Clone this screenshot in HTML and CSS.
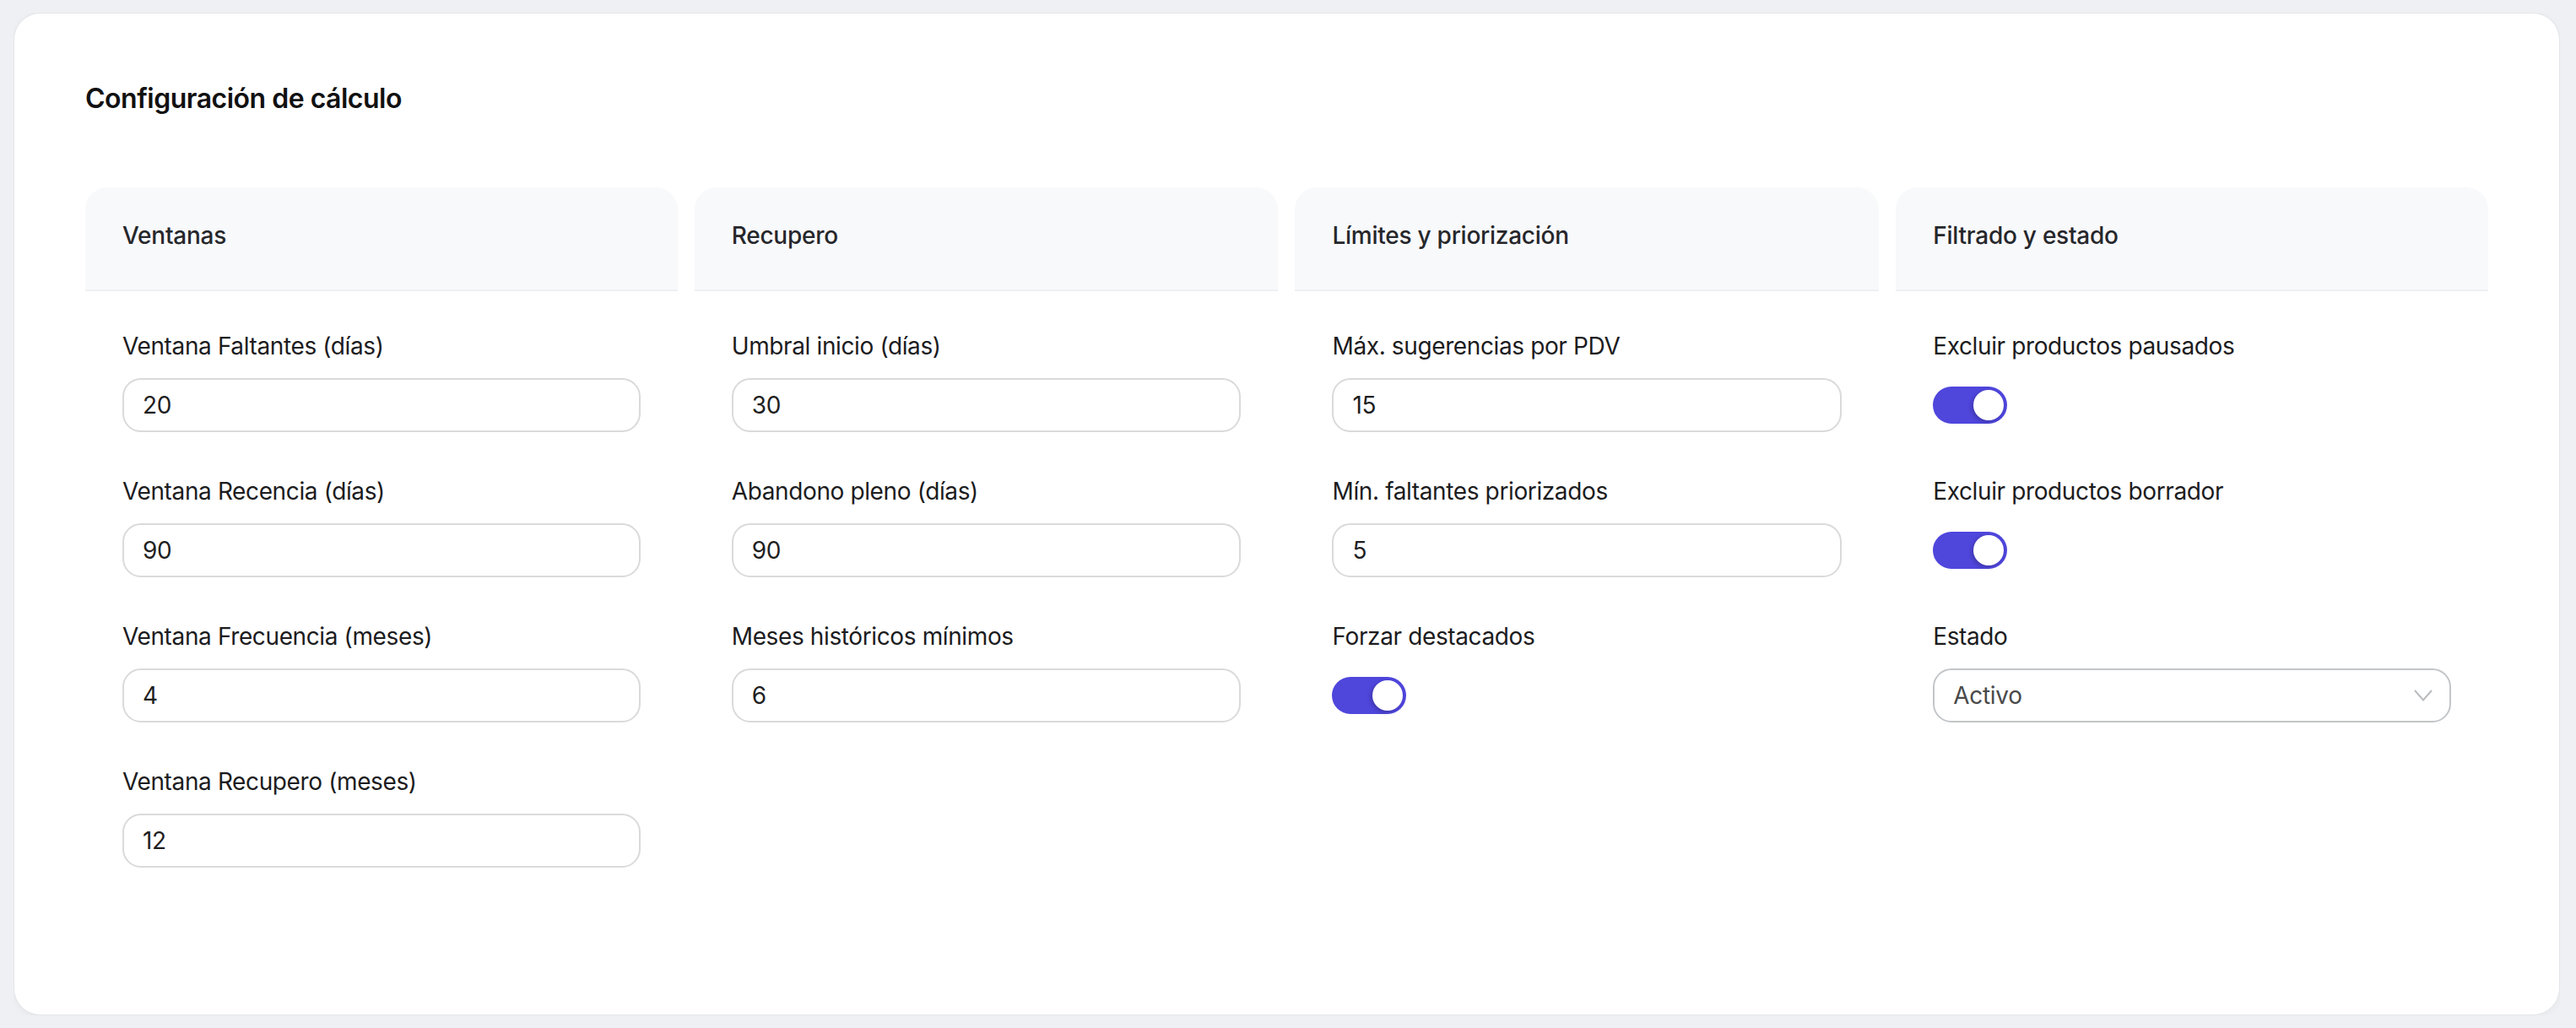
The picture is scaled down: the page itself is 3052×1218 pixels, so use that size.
FILE: index.html
```html
<!DOCTYPE html>
<html lang="es">
<head>
    <meta charset="UTF-8">
    <meta name="viewport" content="width=device-width, initial-scale=1.0">
    <title>Configuración de cálculo</title>
    <link rel="stylesheet" href="styles.css">
</head>
<body>

<div class="card">
    <h2 class="card-title">Configuración de cálculo</h2>

    <div class="sections">
        <section class="section">
            <div class="section-head">Ventanas</div>
            <div class="section-body">
                <div class="field">
                    <label for="winFaltantes">Ventana Faltantes (días)</label>
                    <input class="input" type="text" id="winFaltantes" value="20">
                </div>
                <div class="field">
                    <label for="winRecencia">Ventana Recencia (días)</label>
                    <input class="input" type="text" id="winRecencia" value="90">
                </div>
                <div class="field">
                    <label for="winFrecuencia">Ventana Frecuencia (meses)</label>
                    <input class="input" type="text" id="winFrecuencia" value="4">
                </div>
                <div class="field">
                    <label for="winRecupero">Ventana Recupero (meses)</label>
                    <input class="input" type="text" id="winRecupero" value="12">
                </div>
            </div>
        </section>

        <section class="section">
            <div class="section-head">Recupero</div>
            <div class="section-body">
                <div class="field">
                    <label for="umbralInicio">Umbral inicio (días)</label>
                    <input class="input" type="text" id="umbralInicio" value="30">
                </div>
                <div class="field">
                    <label for="abandonoPleno">Abandono pleno (días)</label>
                    <input class="input" type="text" id="abandonoPleno" value="90">
                </div>
                <div class="field">
                    <label for="mesesMinimos">Meses históricos mínimos</label>
                    <input class="input" type="text" id="mesesMinimos" value="6">
                </div>
            </div>
        </section>

        <section class="section">
            <div class="section-head">Límites y priorización</div>
            <div class="section-body">
                <div class="field">
                    <label for="maxSugerencias">Máx. sugerencias por PDV</label>
                    <input class="input" type="text" id="maxSugerencias" value="15">
                </div>
                <div class="field">
                    <label for="minFaltantes">Mín. faltantes priorizados</label>
                    <input class="input" type="text" id="minFaltantes" value="5">
                </div>
                <div class="field">
                    <label>Forzar destacados</label>
                    <div class="toggle-row">
                        <button class="toggle on" type="button" aria-pressed="true"><span class="knob"></span></button>
                    </div>
                </div>
            </div>
        </section>

        <section class="section">
            <div class="section-head">Filtrado y estado</div>
            <div class="section-body">
                <div class="field">
                    <label>Excluir productos pausados</label>
                    <div class="toggle-row">
                        <button class="toggle on" type="button" aria-pressed="true"><span class="knob"></span></button>
                    </div>
                </div>
                <div class="field">
                    <label>Excluir productos borrador</label>
                    <div class="toggle-row">
                        <button class="toggle on" type="button" aria-pressed="true"><span class="knob"></span></button>
                    </div>
                </div>
                <div class="field">
                    <label for="estado">Estado</label>
                    <div class="select-wrap">
                        <select class="select" id="estado">
                            <option>Activo</option>
                            <option>Inactivo</option>
                        </select>
                        <svg class="chevron" width="22" height="14" viewBox="0 0 22 14">
                            <path d="M1 1 L11 12.5 L21 1" fill="none" stroke="#b9bcbf" stroke-width="2"/>
                        </svg>
                    </div>
                </div>
            </div>
        </section>
    </div>
</div>

</body>
</html>
```

FILE: styles.css
```css
body {
    margin: 15px 19px 15px 16px;
    background-color: #eef0f3;
    font-family: Inter, "Liberation Sans", sans-serif;
    color: #1c1c1e;
}

.card {
    background-color: #fff;
    border: 1px solid #e3e5e9;
    border-radius: 32px;
    box-shadow: 0 2px 8px rgba(0, 0, 0, 0.04);
    padding: 77px 84px 129px 84px;
}

.card-title {
    margin: 0 0 81px 0;
    font-size: 32px;
    line-height: 48px;
    font-weight: 600;
    letter-spacing: -0.5px;
    color: #111;
}

.sections {
    display: grid;
    grid-template-columns: 351fr 346fr 346fr 351fr;
    gap: 20px;
    align-items: start;
}

.section-head {
    background-color: #f8f9fb;
    border-bottom: 2px solid #eef0f4;
    border-radius: 26px 26px 0 0;
    padding: 37px 44px 44px 44px;
    font-size: 28px;
    line-height: 40px;
    font-weight: 500;
    letter-spacing: -0.25px;
    color: #26272b;
}

.section-body {
    display: flex;
    flex-direction: column;
    gap: 50px;
    padding: 45px 44px;
}

.field label {
    display: block;
    margin-bottom: 18px;
    font-size: 28px;
    line-height: 40px;
    letter-spacing: -0.38px;
    color: #1c1c1e;
}

.input {
    display: block;
    box-sizing: border-box;
    width: 100%;
    height: 64px;
    margin: 0;
    padding: 0 22px;
    border: 2px solid #dadada;
    border-radius: 22px;
    background-color: #fff;
    font-family: inherit;
    font-size: 28px;
    letter-spacing: -0.3px;
    color: #1f1f1f;
    outline: none;
}

.toggle-row {
    display: flex;
    align-items: center;
    height: 64px;
}

.toggle {
    position: relative;
    width: 88px;
    height: 44px;
    padding: 0;
    border: none;
    border-radius: 22px;
    background-color: #d1d5db;
    cursor: pointer;
}

.toggle.on {
    background-color: #4f46dc;
}

.knob {
    position: absolute;
    top: 4px;
    left: 4px;
    width: 36px;
    height: 36px;
    border-radius: 50%;
    background-color: #fff;
    box-shadow: -2px 2px 5px rgba(0, 0, 0, 0.22);
}

.toggle.on .knob {
    left: 48px;
}

.select-wrap {
    position: relative;
}

.select {
    display: block;
    box-sizing: border-box;
    width: 100%;
    height: 64px;
    margin: 0;
    padding: 0 22px;
    border: 2px solid #c3c6c8;
    border-radius: 22px;
    background-color: #fff;
    font-family: inherit;
    font-size: 28px;
    letter-spacing: -0.3px;
    color: #4a4a4a;
    appearance: none;
    -webkit-appearance: none;
    outline: none;
}

.chevron {
    position: absolute;
    right: 22px;
    top: 25px;
    pointer-events: none;
}
```
